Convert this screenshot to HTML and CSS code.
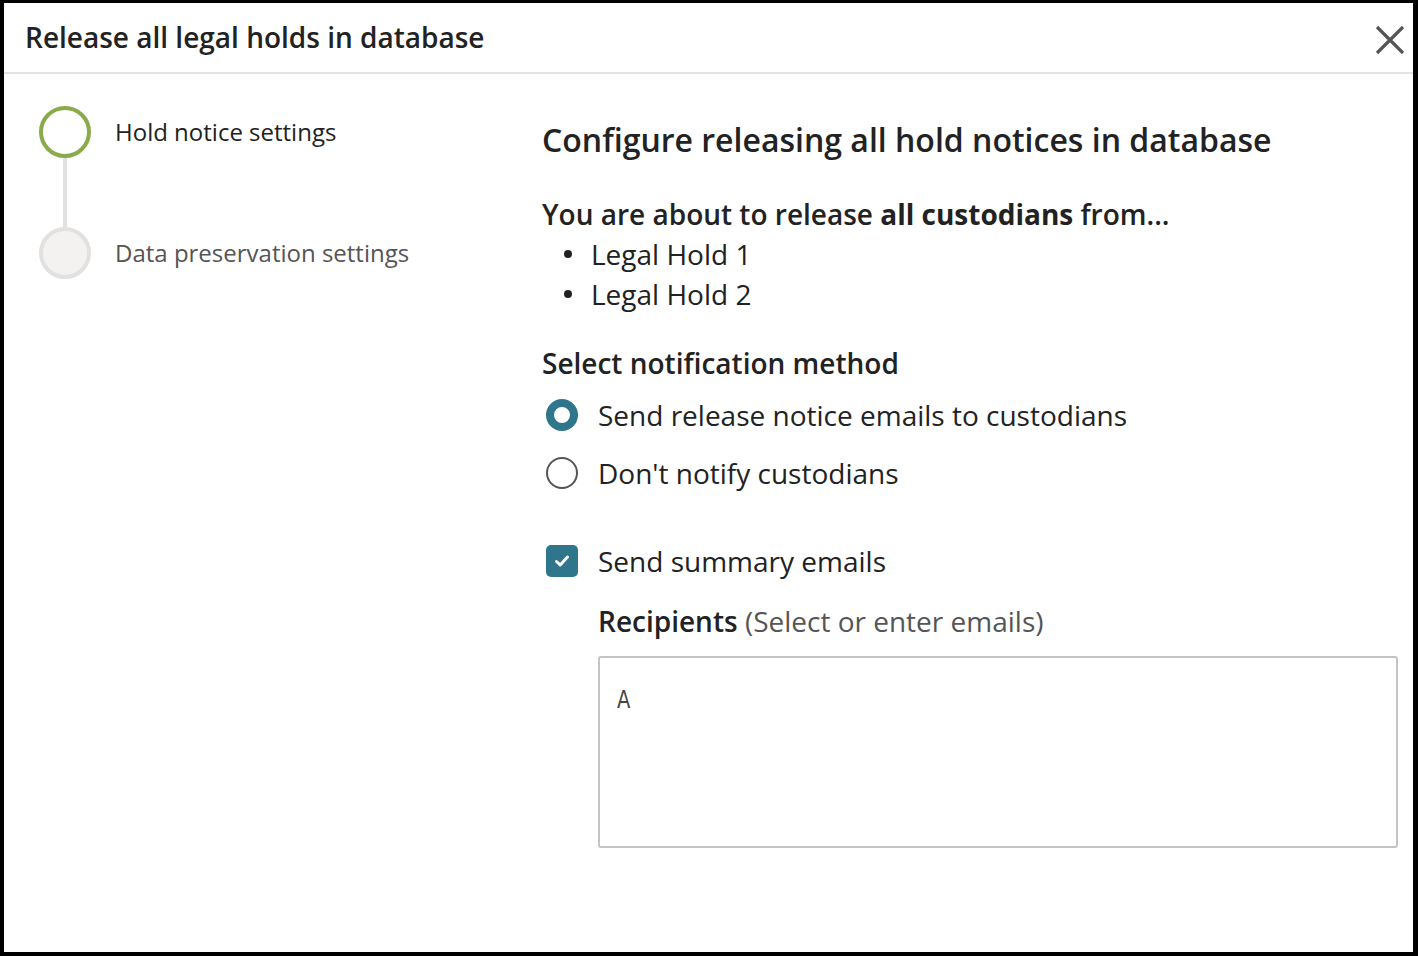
FILE: index.html
```html
<!DOCTYPE html>
<html lang="en">
<head>
<meta charset="utf-8">
<title>Release all legal holds in database</title>
<link rel="stylesheet" href="styles.css">
</head>
<body>
<div class="dialog">
  <header class="header">
    <h1 class="title">Release all legal holds in database</h1>
    <button class="close" aria-label="Close">
      <svg width="30" height="30" viewBox="0 0 30 30"><path d="M2 2 L28 28 M28 2 L2 28" stroke="#555" stroke-width="3.2" fill="none"/></svg>
    </button>
  </header>
  <div class="body">
    <nav class="stepper">
      <div class="step active">
        <span class="dot"></span>
        <span class="step-label">Hold notice settings</span>
      </div>
      <div class="connector"></div>
      <div class="step">
        <span class="dot"></span>
        <span class="step-label">Data preservation settings</span>
      </div>
    </nav>
    <main class="content">
      <h2 class="heading">Configure releasing all hold notices in database</h2>
      <p class="lead">You are about to release <strong>all custodians</strong> from...</p>
      <ul class="holds">
        <li>Legal Hold 1</li>
        <li>Legal Hold 2</li>
      </ul>
      <h3 class="subheading">Select notification method</h3>
      <div class="options">
        <label class="option"><span class="radio checked"></span>Send release notice emails to custodians</label>
        <label class="option"><span class="radio"></span>Don't notify custodians</label>
      </div>
      <label class="option check-row"><span class="checkbox"><svg width="16" height="14" viewBox="0 0 16 14"><path d="M2.5 7.5 L6.2 11 L13.5 3" stroke="#fff" stroke-width="3" fill="none" stroke-linecap="round" stroke-linejoin="round"/></svg></span>Send summary emails</label>
      <div class="recipients">
        <div class="rec-label"><strong>Recipients</strong> <span class="hint">(Select or enter emails)</span></div>
        <div class="textbox"><span class="placeholder">A</span></div>
      </div>
    </main>
  </div>
</div>
</body>
</html>
```
FILE: styles.css
```css
* { box-sizing: border-box; }
html, body { margin: 0; height: 100%; }
body {
  background: #000;
  padding: 3px 5px 4px 4px;
  font-family: "Open Sans", "Noto Sans", sans-serif;
  color: #222;
}
.dialog {
  background: #fff;
  height: 949px;
  display: flex;
  flex-direction: column;
}
.header {
  height: 71px;
  border-bottom: 2px solid #e3e3e3;
  display: flex;
  align-items: center;
  justify-content: space-between;
  padding: 0 8px 0 21px;
}
.title {
  margin: 0;
  font-size: 28px;
  font-weight: 600;
  color: #222;
  line-height: 1;
  position: relative;
  top: -1px;
}
.close {
  border: 0;
  background: none;
  padding: 0;
  width: 30px;
  height: 30px;
  display: flex;
  position: relative;
  top: 2px;
}
.body {
  display: flex;
  flex: 1;
}
.stepper {
  width: 538px;
  padding: 32px 0 0 35px;
  display: flex;
  flex-direction: column;
}
.step {
  display: flex;
  align-items: center;
  gap: 24px;
}
.dot {
  width: 52px;
  height: 52px;
  border-radius: 50%;
  border: 4px solid #e2e1df;
  background: #f3f2f0;
  flex: none;
}
.step.active .dot {
  border-color: #8aab4c;
  background: #fff;
}
.step-label {
  font-size: 24px;
  color: #555;
  position: relative;
  top: -1px;
}
.step.active .step-label { color: #222; }
.connector {
  width: 4px;
  height: 69px;
  margin-left: 24px;
  background: #e2e1df;
}
.content {
  flex: 1;
  padding-top: 44px;
  font-size: 28px;
}
.heading {
  margin: 0;
  font-size: 32px;
  font-weight: 600;
  line-height: 44px;
}
.lead {
  margin: 32px 0 0;
  line-height: 40px;
  font-weight: 600;
}
.lead strong { font-weight: 700; }
.holds {
  list-style: none;
  margin: 0;
  padding: 0;
}
.holds li {
  display: flex;
  align-items: center;
  line-height: 40px;
  gap: 19px;
  padding-left: 22px;
}
.holds li::before {
  content: "";
  width: 8px;
  height: 8px;
  border-radius: 50%;
  background: #222;
}
.subheading {
  margin: 29px 0 0;
  font-size: 28px;
  font-weight: 600;
  line-height: 40px;
}
.options {
  display: flex;
  flex-direction: column;
  gap: 18px;
  margin-top: 12px;
}
.option {
  display: flex;
  align-items: center;
  gap: 20px;
  line-height: 40px;
  padding-left: 4px;
}
.radio {
  width: 32px;
  height: 32px;
  border-radius: 50%;
  border: 2px solid #555;
  flex: none;
}
.radio.checked {
  border: 8.5px solid #2f758b;
}
.check-row {
  margin-top: 48px;
}
.checkbox {
  width: 32px;
  height: 32px;
  border-radius: 5px;
  background: #2f758b;
  display: flex;
  align-items: center;
  justify-content: center;
  flex: none;
}
.recipients {
  padding-left: 56px;
  margin-top: 20px;
}
.rec-label {
  line-height: 40px;
}
.rec-label strong { font-weight: 600; }
.hint { color: #555; }
.textbox {
  margin-top: 15px;
  width: 800px;
  height: 192px;
  border: 2px solid #c4c4c0;
  border-radius: 3px;
  padding: 20px 0 0 17px;
}
.placeholder {
  display: inline-block;
  font-family: "DejaVu Sans", sans-serif;
  font-size: 25px;
  line-height: 30px;
  color: #444;
  transform: scaleX(0.78);
  transform-origin: left center;
}
```
